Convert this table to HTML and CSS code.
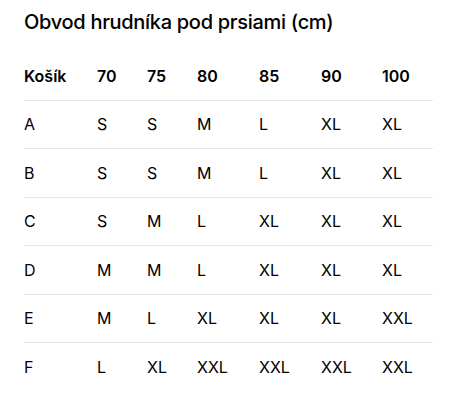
FILE: index.html
```html
<!DOCTYPE html>
<html lang="sk">
<head>
<meta charset="utf-8">
<link rel="stylesheet" href="styles.css">
</head>
<body>
<div class="page">
  <h1 class="title">Obvod hrudníka pod prsiami (cm)</h1>
  <table class="sizes">
    <colgroup>
      <col class="c1"><col class="c2"><col class="c3"><col class="c4"><col class="c5"><col class="c6"><col class="c7">
    </colgroup>
    <thead>
      <tr><th>Košík</th><th>70</th><th>75</th><th>80</th><th>85</th><th>90</th><th>100</th></tr>
    </thead>
    <tbody>
      <tr><td>A</td><td>S</td><td>S</td><td>M</td><td>L</td><td>XL</td><td>XL</td></tr>
      <tr><td>B</td><td>S</td><td>S</td><td>M</td><td>L</td><td>XL</td><td>XL</td></tr>
      <tr><td>C</td><td>S</td><td>M</td><td>L</td><td>XL</td><td>XL</td><td>XL</td></tr>
      <tr><td>D</td><td>M</td><td>M</td><td>L</td><td>XL</td><td>XL</td><td>XL</td></tr>
      <tr><td>E</td><td>M</td><td>L</td><td>XL</td><td>XL</td><td>XL</td><td>XXL</td></tr>
      <tr><td>F</td><td>L</td><td>XL</td><td>XXL</td><td>XXL</td><td>XXL</td><td>XXL</td></tr>
    </tbody>
  </table>
</div>
</body>
</html>
```

FILE: styles.css
```css
html, body {
  margin: 0;
  padding: 0;
  background: #ffffff;
}

body {
  font-family: Inter, "Noto Sans", "Liberation Sans", sans-serif;
  color: #000000;
}

.page {
  padding: 10px 27px 0 24px;
}

.title {
  margin: 0;
  font-size: 20px;
  font-weight: 500;
  line-height: 24px;
  letter-spacing: -0.3px;
}

.sizes {
  margin-top: 18px;
  width: 409px;
  border-collapse: collapse;
  table-layout: fixed;
  font-size: 16px;
}

.c1 { width: 73px; }
.c2 { width: 50px; }
.c3 { width: 50px; }
.c4 { width: 62px; }
.c5 { width: 62px; }
.c6 { width: 61px; }
.c7 { width: 51px; }

.sizes th,
.sizes td {
  padding: 0;
  height: 47.5px;
  text-align: left;
  vertical-align: middle;
  line-height: 20px;
}

.sizes th {
  font-weight: 600;
}

.sizes td {
  font-weight: 400;
}

.sizes tr {
  border-bottom: 1px solid #e6e6e6;
}

.sizes tbody tr:last-child {
  border-bottom: none;
}
```
